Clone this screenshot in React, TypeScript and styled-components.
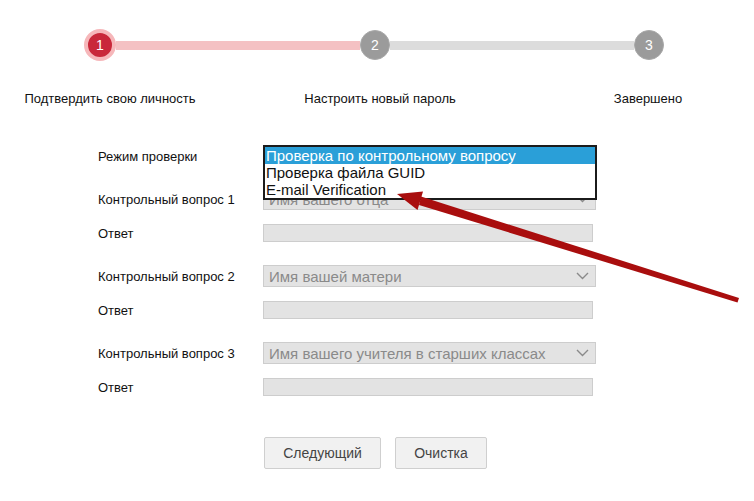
import React from 'react';
import styled, { createGlobalStyle } from 'styled-components';

const GlobalStyle = createGlobalStyle`
  html, body {
    margin: 0;
    padding: 0;
    background: #fff;
  }
  body {
    font-family: 'Liberation Sans', Arial, sans-serif;
    color: #222;
  }
`;

const Page = styled.div`
  position: relative;
  width: 754px;
  height: 501px;
  overflow: hidden;
  padding-top: 30px;
  box-sizing: border-box;
`;

/* ---- stepper ---- */

const Track = styled.div`
  display: flex;
  align-items: center;
  width: 580px;
  height: 30px;
  margin-left: 84px;
`;

const Dot = styled.div<{ $active?: boolean }>`
  flex: none;
  display: flex;
  align-items: center;
  justify-content: center;
  box-sizing: border-box;
  width: ${({ $active }) => ($active ? '32px' : '30px')};
  height: ${({ $active }) => ($active ? '32px' : '30px')};
  margin: ${({ $active }) => ($active ? '-1px 0' : '0')};
  border-radius: 50%;
  background: ${({ $active }) => ($active ? '#c9283a' : '#9b9b9b')};
  border: ${({ $active }) => ($active ? '4px solid #f6b7ba' : '1px solid #a9a9a9')};
  color: #fff;
  font-size: 14px;
`;

const Line = styled.div<{ $done?: boolean }>`
  flex: 1;
  height: 9px;
  background: ${({ $done }) => ($done ? '#f4c1c3' : '#dcdcdc')};
`;

const StepLabels = styled.div`
  display: grid;
  grid-template-columns: 180px 360px 176px;
  margin: 31px 0 0 20px;
  font-size: 13px;
  line-height: 16px;
  color: #111;
`;

const StepLabel = styled.div`
  text-align: center;
`;

/* ---- form ---- */

const Form = styled.div`
  display: flex;
  flex-direction: column;
  margin: 38px 0 0 98px;
`;

const Field = styled.div<{ $gap: number }>`
  position: relative;
  display: grid;
  grid-template-columns: 165px 333px;
  align-items: center;
  margin-top: ${({ $gap }) => $gap}px;
`;

const Label = styled.div`
  font-size: 13px;
  color: #111;
`;

const Select = styled.div`
  display: flex;
  align-items: center;
  justify-content: space-between;
  box-sizing: border-box;
  width: 333px;
  height: 22px;
  padding: 0 6px 0 5px;
  background: #e3e3e3;
  border: 1px solid #cdcdcd;
  color: #8a8a8a;
  font-size: 15px;
  white-space: nowrap;
`;

const Input = styled.div`
  box-sizing: border-box;
  width: 330px;
  height: 18px;
  background: #e3e3e3;
  border: 1px solid #cdcdcd;
`;

const OptionList = styled.ul`
  position: absolute;
  left: 165px;
  top: 0;
  z-index: 2;
  box-sizing: border-box;
  width: 334px;
  margin: 0;
  padding: 0;
  list-style: none;
  background: #fff;
  border: 2px solid #1b1b1b;
  font-size: 15px;
  line-height: 17px;
`;

const Option = styled.li<{ $selected?: boolean }>`
  padding-left: 1px;
  height: 17px;
  background: ${({ $selected }) => ($selected ? '#2a9fd8' : 'transparent')};
  color: ${({ $selected }) => ($selected ? '#fff' : '#111')};
`;

const Buttons = styled.div`
  display: flex;
  gap: 14px;
  margin: 41px 0 0 166px;
`;

const Button = styled.button<{ $width: number }>`
  box-sizing: border-box;
  width: ${({ $width }) => $width}px;
  height: 32px;
  background: #f1f1f1;
  border: 1px solid #cfcfcf;
  border-radius: 2px;
  color: #444;
  font-family: inherit;
  font-size: 14px;
`;

const Pointer = styled.svg`
  position: absolute;
  left: 0;
  top: 0;
  z-index: 3;
  pointer-events: none;
`;

const Chevron = () => (
  <svg width="13" height="8" viewBox="0 0 13 8">
    <path d="M1 1 L6.5 6.5 L12 1" fill="none" stroke="#8a8a8a" strokeWidth="1.4" />
  </svg>
);

const modes = ['Проверка по контрольному вопросу', 'Проверка файла GUID', 'E-mail Verification'];

const questions = [
  { label: 'Контрольный вопрос 1', value: 'Имя вашего отца' },
  { label: 'Контрольный вопрос 2', value: 'Имя вашей матери' },
  { label: 'Контрольный вопрос 3', value: 'Имя вашего учителя в старших классах' },
];

export default function App() {
  return (
    <Page>
      <GlobalStyle />
      <Track>
        <Dot $active>1</Dot>
        <Line $done />
        <Dot>2</Dot>
        <Line />
        <Dot>3</Dot>
      </Track>
      <StepLabels>
        <StepLabel>Подтвердить свою личность</StepLabel>
        <StepLabel>Настроить новый пароль</StepLabel>
        <StepLabel>Завершено</StepLabel>
      </StepLabels>

      <Form>
        <Field $gap={0}>
          <Label>Режим проверки</Label>
          {/* the open list sits over the mode select */}
          <Select />
          <OptionList>
            {modes.map((m, i) => (
              <Option key={m} $selected={i === 0}>
                {m}
              </Option>
            ))}
          </OptionList>
        </Field>
        {questions.map((q, i) => (
          <React.Fragment key={q.label}>
            <Field $gap={i === 0 ? 21 : 23}>
              <Label>{q.label}</Label>
              <Select>
                <span>{q.value}</span>
                <Chevron />
              </Select>
            </Field>
            <Field $gap={14}>
              <Label>Ответ</Label>
              <Input />
            </Field>
          </React.Fragment>
        ))}
        <Buttons>
          <Button $width={117}>Следующий</Button>
          <Button $width={92}>Очистка</Button>
        </Buttons>
      </Form>

      <Pointer width="754" height="501" viewBox="0 0 754 501">
        <polygon points="739,298 737.5,302.5 419,205 421,196.5" fill="#a90e0e" />
        <polygon points="397,194 423,191.5 417.5,210" fill="#a90e0e" />
      </Pointer>
    </Page>
  );
}
